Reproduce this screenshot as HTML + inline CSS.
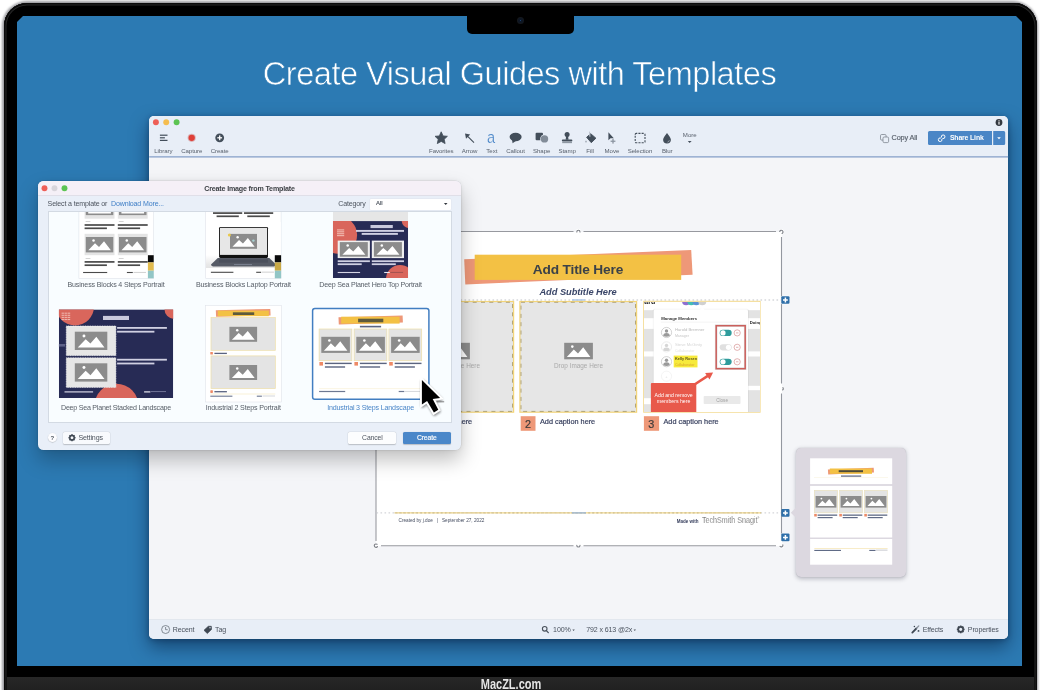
<!DOCTYPE html>
<html lang="en">
<head>
<meta charset="utf-8">
<title>Create Visual Guides with Templates</title>
<style>
*{box-sizing:border-box;margin:0;padding:0}
html,body{width:1040px;height:690px;overflow:hidden;background:#fff}
body{position:relative;font-family:"Liberation Sans",sans-serif;color:#444b55}
.abs{position:absolute}
.t{position:absolute;white-space:nowrap;line-height:1}
.c{transform:translateX(-50%)}
/* laptop */
#rim{left:1.600px;top:1.200px;width:1036.800px;height:720px;border-radius:25px;background:#9c9ca0;filter:blur(1.100px)}
#bezel{left:3.5px;top:3px;width:1033px;height:720px;border-radius:23px;background:#000;box-shadow:inset 0 0 0 1.5px #0b0b0b, inset 0 0 0 2.5px #262626, inset 0 0 0 4px #000}
#screen{left:17px;top:16px;width:1005px;height:650px;background:#2c7ab3;clip-path:polygon(6px 0,999px 0,1005px 6px,1005px 650px,0 650px,0 6px);overflow:hidden}
#notch{left:467px;top:14px;width:107px;height:19.5px;background:#000;border-radius:0 0 5px 5px}
#cam{left:518px;top:18px;width:5px;height:5px;border-radius:50%;background:#0d1624;box-shadow:0 0 0 1px #15181d}
#cam:after{content:"";position:absolute;left:1.7px;top:1.7px;width:1.6px;height:1.6px;border-radius:50%;background:#1f4f86}
#base{left:7px;top:677px;width:1027px;height:20px;background:linear-gradient(#272727,#1d1d1d)}
#brand{left:511.200px;top:677.200px;font-weight:bold;font-size:14.400px;color:#e6e6e6;transform:translateX(-50%) scaleX(.765);text-shadow:0 0 1px rgba(0,0,0,.6)}
#head{left:519.500px;top:58px;font-size:32.600px;color:#fff;letter-spacing:-.51px;transform:translateX(-50%);-webkit-text-stroke:.6px #2c7ab3}
/* app window */
#app{left:149.200px;top:116px;width:858.900px;height:523.300px;border-radius:5px;background:#f4f5f8;box-shadow:0 8px 18px rgba(0,20,50,.5),0 1px 5px rgba(0,20,50,.3)}
#tb{left:0;top:0;width:100%;height:41px;background:#e8eef7;border-radius:5px 5px 0 0}
#sb{left:0;top:503px;width:100%;height:20.300px;background:#e8eef7;border-radius:0 0 5px 5px;border-top:.5px solid #e2e7ee}
.tl{position:absolute;width:6.4px;height:6.4px;border-radius:50%}
.lab{position:absolute;white-space:nowrap;line-height:1;font-size:6.100px;letter-spacing:-.06px;color:#59616d;transform:translateX(-50%);top:148.200px}
.sbt{position:absolute;white-space:nowrap;line-height:1;font-size:7.050px;letter-spacing:-.12px;color:#4a525e;top:625.700px}
</style>
</head>
<body>
<div id="root" style="position:absolute;left:0;top:0;width:1040px;height:690px;will-change:transform;overflow:hidden">
<div id="rim" class="abs"></div>
<div id="bezel" class="abs"></div>
<div id="screen" class="abs"></div>
<div id="notch" class="abs"></div>
<div id="cam" class="abs"></div>
<div id="base" class="abs"></div>
<div id="brand" class="t">MacZL.com</div>
<div id="head" class="t">Create Visual Guides with Templates</div>

<!-- APP WINDOW -->
<div id="app" class="abs">
  <div id="tb" class="abs"></div>
  <div id="sb" class="abs"></div>
</div>
<svg class="abs" style="left:0;top:0" width="1040" height="690" viewBox="0 0 1040 690"><rect x="149.200" y="156.050" width="858.900" height="1.600" fill="#9bb0d2"/><circle cx="155.900" cy="122.200" r="2.950" fill="#ee5f57"/><circle cx="166.200" cy="122.200" r="2.950" fill="#f5bd4f"/><circle cx="176.600" cy="122.200" r="2.950" fill="#5cc453"/></svg>

<svg class="abs" style="left:0;top:0" width="1040" height="690" viewBox="0 0 1040 690">
 <g fill="#434e5a" stroke="none">
  <!-- library -->
  <rect x="159.9" y="134.6" width="7.6" height="1.2"/>
  <rect x="159.9" y="137.2" width="5" height="1.2"/>
  <rect x="159.9" y="139.8" width="7.6" height="1.2"/>
  <!-- capture -->
  <circle cx="191.7" cy="137.8" r="4.100" fill="#d9b4b8"/>
  <circle cx="191.7" cy="137.8" r="3.150" fill="#df3f38"/>
  <!-- create -->
  <circle cx="219.7" cy="137.8" r="4.4"/>
  <rect x="217.300" y="137.150" width="4.800" height="1.300" fill="#fff"/>
  <rect x="219.050" y="135.400" width="1.300" height="4.800" fill="#fff"/>
  <!-- star -->
  <path d="M441.2 131.8 L443.1 135.9 L447.4 136.3 L444.2 139.3 L445.1 143.6 L441.2 141.4 L437.3 143.6 L438.2 139.3 L435 136.3 L439.3 135.9 Z" stroke="#434e5a" stroke-width=".8" stroke-linejoin="round"/>
  <!-- arrow -->
  <path d="M474 142.6 L467.2 135.8" stroke="#434e5a" stroke-width="1.1" fill="none"/>
  <path d="M465 133.6 L470.2 134.6 L466 138.8 Z"/>
  <!-- callout -->
  <ellipse cx="515.6" cy="137" rx="6" ry="4.2"/>
  <path d="M512 139.5 L512.6 143.2 L516.5 140.5 Z"/>
  <!-- shape -->
  <rect x="535.6" y="132.8" width="7.4" height="7.4" rx="1"/>
  <circle cx="544.5" cy="138.9" r="4.3" fill="#e8eef7"/>
  <circle cx="544.5" cy="138.9" r="3.7" fill="#828c98"/>
  <!-- stamp -->
  <circle cx="567.1" cy="134.6" r="2.5"/>
  <path d="M566.100 136 h2 l.4 3.800 h-2.800 z"/>
  <rect x="561.9" y="139.4" width="10.4" height="2.2" rx=".8"/>
  <rect x="562.2" y="142.3" width="9.8" height=".8" fill="#68727e"/>
  <!-- fill -->
  <path d="M590.700 133.700 L595.900 138.200 L591.300 142.700 L586.600 137.300 Z" stroke="#434e5a" stroke-width=".9" stroke-linejoin="round"/>
  <path d="M589.500 132 L589.900 136.200" stroke="#bfc6d0" stroke-width="1.100" fill="none" stroke-linecap="round"/>
  <path d="M586 140.200 q1.300 1.900 0 2.500 q-1.300 -.6 0 -2.500z" fill="#7a838f"/>
  <!-- move -->
  <path d="M608.4 132.2 L608.4 140.2 L610.5 138.3 L613.8 138.3 Z"/>
  <rect x="610.6" y="140.6" width="4.8" height="1.3" fill="#8d96a1"/>
  <rect x="612.35" y="138.8" width="1.3" height="4.8" fill="#8d96a1"/>
  <!-- selection -->
  <rect x="635.2" y="133.4" width="9.8" height="9.3" rx="1" fill="none" stroke="#434e5a" stroke-width="1.1" stroke-dasharray="2.1 1.1" stroke-dashoffset="1"/>
  <!-- blur -->
  <path d="M667 132.9 C668.6 135.3 670.9 137.6 670.9 139.8 A3.9 3.6 0 0 1 663.1 139.8 C663.1 137.600 665.4 135.3 667 132.900 Z"/>
  <path d="M669.3 140.300 a2.200 2.200 0 0 1 -1.800 1.800" stroke="#aeb6c0" stroke-width=".8" fill="none"/>
  <!-- more caret -->
  <path d="M687.8 141 h3.800 l-1.900 2 z"/>
  <!-- info -->
  <circle cx="999" cy="122.500" r="3.400" fill="#33383f"/>
  <rect x="998.45" y="121.900" width="1.100" height="2.700" fill="#fff"/>
  <rect x="998.45" y="120.300" width="1.100" height="1.100" fill="#fff"/>
  <!-- copy all -->
  <rect x="880.5" y="134.500" width="5.600" height="5.600" rx="1.200" fill="none" stroke="#7d858f" stroke-width=".8"/>
  <rect x="883" y="137" width="5.600" height="5.600" rx="1.200" fill="#e8eef7" stroke="#7d858f" stroke-width=".8"/>
 </g>
 <!-- share link -->
 <path d="M929.500 131.100 H992 V145 H929.500 a1.500 1.500 0 0 1 -1.500 -1.500 V132.600 a1.500 1.500 0 0 1 1.500 -1.500z" fill="#4a86c6"/>
 <path d="M993.200 131.100 H1003.700 a1.500 1.500 0 0 1 1.500 1.500 V143.500 a1.500 1.500 0 0 1 -1.500 1.500 H993.200z" fill="#4a86c6"/>
 <path d="M997.200 137.200 h3.600 l-1.800 2 z" fill="#fff"/>
 <g fill="none" stroke="#fff" stroke-width="1" stroke-linecap="round">
  <path d="M941.300 137.100 a1.850 1.850 0 1 1 1.500 1.500"/>
  <path d="M942 139.400 a1.850 1.850 0 1 1 -1.500 -1.500"/>
 </g>
</svg>
<div class="lab" style="left:163.400px">Library</div>
<div class="lab" style="left:191.800px">Capture</div>
<div class="lab" style="left:219.700px">Create</div>
<div class="lab" style="left:441.300px">Favorites</div>
<div class="lab" style="left:469.500px">Arrow</div>
<div class="lab" style="left:491.800px">Text</div>
<div class="lab" style="left:515.500px">Callout</div>
<div class="lab" style="left:541.700px">Shape</div>
<div class="lab" style="left:567.100px">Stamp</div>
<div class="lab" style="left:590px">Fill</div>
<div class="lab" style="left:611.900px">Move</div>
<div class="lab" style="left:640px">Selection</div>
<div class="lab" style="left:667.200px">Blur</div>
<div class="lab" style="left:689.700px;top:131.900px;font-size:6.100px">More</div>
<div class="t c" style="left:491.300px;top:129.200px;font-size:17px;color:#4a86c8;-webkit-text-stroke:.22px #e8eef7;transform:translateX(-50%) scaleX(.86)">a</div>
<div class="t" style="left:891.600px;top:134.200px;font-size:7.300px;letter-spacing:-.15px;color:#59616c;-webkit-text-stroke:.15px #59616c">Copy All</div>
<div class="t" style="left:949.900px;top:135.200px;font-size:6.900px;letter-spacing:-.15px;font-weight:bold;color:#fff">Share Link</div>

<div class="abs" style="left:376px;top:231.5px;width:405.5px;height:314px;background:#fff"></div>
<svg class="abs" style="left:0;top:0" width="1040" height="690" viewBox="0 0 1040 690">
 <!-- selection frame -->
 <g stroke="#97999f" stroke-width="1.1" fill="none">
  <path d="M381 231.500 H573.5 M583.500 231.500 H776"/>
  <path d="M381 545.700 H573.5 M583.500 545.700 H776"/>
  <path d="M781.500 237 V383.500 M781.500 393.500 V541" stroke="#93979f" stroke-width="1.100"/>
  <path d="M376 237 V541" stroke="#85878c" stroke-width=".9"/>
 </g>
 <g fill="#fff" opacity=".9">
  <circle cx="578.400" cy="231.500" r="2.700"/><circle cx="781.400" cy="231.800" r="2.700"/><circle cx="781.500" cy="388.700" r="2.700"/>
  <circle cx="781.500" cy="545.700" r="2.700"/><circle cx="578.400" cy="545.700" r="2.700"/><circle cx="376" cy="545.700" r="2.700"/>
 </g>
 <g fill="none" stroke="#7f8289" stroke-width="1.150" stroke-linecap="round">
  <path d="M576.800 231.900 a1.600 1.600 0 0 1 3.200 0"/>
  <path d="M779.700 231.500 a1.700 1.700 0 1 1 2.400 2"/>
  <path d="M782.900 387.600 a1.600 1.600 0 0 1 -.3 2.400"/>
  <path d="M782.900 544.800 a1.700 1.700 0 0 1 -2.900 1.500"/>
  <path d="M580 545.400 a1.600 1.600 0 0 1 -3.200 0"/>
  <path d="M377.400 546.600 a1.700 1.700 0 1 1 -.4 -2.300"/>
 </g>
 <!-- banner -->
 <path d="M464.200 259.300 L691.200 250.100 L692.600 274.800 L465.300 284.400 Z" fill="#ee9878"/>
 <rect x="474.700" y="254.700" width="206.500" height="25.200" fill="#f3c144"/>
 <!-- guide lines -->
 <path d="M376.500 300 H781" stroke="#b9bcc2" stroke-width=".9" stroke-dasharray="1.600 2.400"/>
 <path d="M376.500 512.900 H781" stroke="#c3c5ca" stroke-width=".9" stroke-dasharray="1.600 2.400"/>
 <rect x="572" y="299.300" width="13" height="1.400" fill="#a8c3e6"/>
 <!-- placeholders -->
 <g>
  <rect x="396.900" y="301.500" width="116.700" height="110.700" fill="#e6e6e6" stroke="#f3d57a" stroke-width="1.200"/>
  <rect x="398" y="302.300" width="114.500" height="109.100" fill="none" stroke="#a89a68" stroke-width="1" stroke-dasharray="4 4.300" opacity=".85"/>
  <rect x="519.900" y="301.500" width="116.700" height="110.700" fill="#e6e6e6" stroke="#f3d57a" stroke-width="1.200"/>
  <rect x="521" y="302.300" width="114.500" height="109.100" fill="none" stroke="#a89a68" stroke-width="1" stroke-dasharray="4 4.300" opacity=".85"/>
  <rect x="643.700" y="301.300" width="116.400" height="110.900" fill="#fff" stroke="#f3d98a" stroke-width="1"/>
 </g>
 <!-- image icons -->
 <g id="imgico2">
  <rect x="564.200" y="342.800" width="28.700" height="16.500" fill="#8c8c8c"/>
  <path d="M566.800 357 L573.800 349.500 L578 353.500 L583.200 347.300 L590.400 357 Z" fill="#fff"/>
  <circle cx="572.300" cy="346.600" r="1.300" fill="#fff"/>
 </g>
 <g transform="translate(-123,0)">
  <rect x="564.200" y="342.800" width="28.700" height="16.500" fill="#8c8c8c"/>
  <path d="M566.800 357 L573.800 349.500 L578 353.500 L583.200 347.300 L590.400 357 Z" fill="#fff"/>
  <circle cx="572.300" cy="346.600" r="1.300" fill="#fff"/>
 </g>
 <!-- badges -->
 <rect x="397.700" y="416.200" width="14.800" height="14.600" fill="#ee9878"/>
 <rect x="520.700" y="416.200" width="14.800" height="14.600" fill="#ee9878"/>
 <rect x="643.900" y="416.200" width="15.200" height="14.600" fill="#ee9878"/>
 <!-- footer line -->
 <path d="M394.600 512.900 H761.200" stroke="#f1d274" stroke-width="1"/>
 <path d="M394.600 512.900 H761.200" stroke="#b9ac86" stroke-width=".8" stroke-dasharray="2.400 1.800" opacity=".75"/>
 <rect x="572" y="512.200" width="14" height="1.400" fill="#9fb8d8"/>
 <!-- plus buttons -->
 <g id="plus1">
  <rect x="780.700" y="295.700" width="9.400" height="8.600" rx="1.600" fill="#fff" opacity=".8"/>
  <rect x="781.300" y="296.200" width="8.200" height="7.600" rx="1" fill="#2f6fa9"/>
  <path d="M783 300 h4.800 M785.400 297.600 v4.800" stroke="#fff" stroke-width="1.500"/>
 </g>
 <g transform="translate(0,212.900)">
  <rect x="781.300" y="296.200" width="8.200" height="7.600" rx="1" fill="#2f6fa9"/>
  <path d="M783 300 h4.800 M785.400 297.600 v4.800" stroke="#fff" stroke-width="1.500"/>
 </g>
 <g transform="translate(0,237.400)">
  <rect x="780.700" y="295.700" width="9.400" height="8.600" rx="1.600" fill="#fff" opacity=".8"/>
  <rect x="781.300" y="296.200" width="8.200" height="7.600" rx="1" fill="#2f6fa9"/>
  <path d="M783 300 h4.800 M785.400 297.600 v4.800" stroke="#fff" stroke-width="1.500"/>
 </g>
</svg>
<div class="t c" style="left:578px;top:262.800px;font-size:13.700px;font-weight:bold;color:#3b4148;letter-spacing:-.15px">Add Title Here</div>
<div class="t c" style="left:578px;top:288.200px;font-size:9.300px;font-weight:bold;font-style:italic;color:#3a4668;letter-spacing:-.05px">Add Subtitle Here</div>
<div class="t c" style="left:578.500px;top:362.600px;font-size:6.400px;color:#a9a9a9">Drop Image Here</div>
<div class="t c" style="left:455.500px;top:362.600px;font-size:6.400px;color:#a9a9a9">Drop Image Here</div>
<div class="t c" style="left:404.900px;top:418.800px;font-size:10.800px;color:#3d3a3a;-webkit-text-stroke:.2px #3d3a3a">1</div>
<div class="t c" style="left:527.900px;top:418.800px;font-size:10.800px;color:#3d3a3a;-webkit-text-stroke:.2px #3d3a3a">2</div>
<div class="t c" style="left:651.200px;top:418.800px;font-size:10.800px;color:#3d3a3a;-webkit-text-stroke:.2px #3d3a3a">3</div>
<div class="t" style="left:417px;top:417.600px;font-size:7.300px;color:#3a4260;-webkit-text-stroke:.2px #3a4260">Add caption here</div>
<div class="t" style="left:540px;top:417.600px;font-size:7.300px;color:#3a4260;-webkit-text-stroke:.2px #3a4260">Add caption here</div>
<div class="t" style="left:663.500px;top:417.600px;font-size:7.300px;color:#3a4260;-webkit-text-stroke:.2px #3a4260">Add caption here</div>
<div class="t" style="left:398.500px;top:518.900px;font-size:4.700px;color:#444c60">Created by j.doe &nbsp;&nbsp;|&nbsp;&nbsp; September 27, 2022</div>
<div class="t" style="left:676.800px;top:519.500px;font-size:4.500px;font-weight:bold;color:#3a4260">Made with</div>
<div class="t" style="left:702.400px;top:515.700px;font-size:9.200px;color:#4f4f4f;transform:scaleX(.775);transform-origin:0 50%;-webkit-text-stroke:.22px #fff">TechSmith Snagit<span style="font-size:3px;vertical-align:top;position:relative;top:1.500px;-webkit-text-stroke:0">®</span></div>

<svg class="abs" style="left:644.200px;top:301.800px" width="115.400" height="109.900" viewBox="644.200 301.800 115.400 109.900" font-family="Liberation Sans, sans-serif">
 <rect x="643" y="300" width="118" height="113" fill="#fff"/>
 <!-- gray bands -->
 <g fill="#e3e3e3">
  <rect x="643" y="310" width="118" height="8"/>
  <rect x="643" y="328.700" width="118" height="22.500"/>
  <rect x="643" y="356.300" width="12" height="41.700"/>
  <rect x="643" y="404" width="12" height="9"/>
  <rect x="747" y="356.300" width="14" height="29.300"/>
  <rect x="747" y="390" width="14" height="23"/>
 </g>
 <text x="644.500" y="303.400" font-size="7" font-weight="bold" fill="#222">ard</text>
 <circle cx="686.300" cy="301" r="4" fill="#8f6fd0"/>
 <circle cx="691.500" cy="301" r="4" fill="#43bdb2"/>
 <circle cx="696.500" cy="301" r="4" fill="#5b92d4"/>
 <circle cx="702.500" cy="301" r="4" fill="#d0d0d0"/>
 <!-- popup card -->
 <rect x="653" y="308.600" width="96" height="106" rx="1.500" fill="#000" opacity=".05"/>
 <path d="M655.300 309.300 H700.300 L702.500 306.800 L704.700 309.300 H746.700 a1.500 1.500 0 0 1 1.500 1.500 V413 H653.800 V310.800 a1.500 1.500 0 0 1 1.500 -1.500z" fill="#fff"/>
 <text x="661.400" y="319.500" font-size="4.300" font-weight="bold" fill="#333">Manage Members</text>
 <rect x="661" y="321.600" width="80" height=".5" fill="#e8e8e8"/>
 <text x="750" y="324.300" font-size="4.200" font-weight="bold" fill="#222">Doing</text>
 <!-- avatars -->
 <g id="av">
  <circle cx="666.700" cy="332.300" r="5.100" fill="#fff" stroke="#b5b5b5" stroke-width=".6"/>
  <circle cx="666.700" cy="330.800" r="1.700" fill="#9a9a9a"/>
  <path d="M663.400 335.800 q0 -2.900 3.300 -2.900 q3.300 0 3.300 2.900 q-3.300 1.400 -6.600 0z" fill="#9a9a9a"/>
 </g>
 <g opacity=".4" transform="translate(0,14.400)">
  <circle cx="666.700" cy="332.300" r="5.100" fill="#fff" stroke="#b5b5b5" stroke-width=".6"/>
  <circle cx="666.700" cy="330.800" r="1.700" fill="#9a9a9a"/>
  <path d="M663.400 335.800 q0 -2.900 3.300 -2.900 q3.300 0 3.300 2.900 q-3.300 1.400 -6.600 0z" fill="#9a9a9a"/>
 </g>
 <g transform="translate(0,29.200)">
  <circle cx="666.700" cy="332.300" r="5.100" fill="#fff" stroke="#b5b5b5" stroke-width=".6"/>
  <circle cx="666.700" cy="330.800" r="1.700" fill="#9a9a9a"/>
  <path d="M663.400 335.800 q0 -2.900 3.300 -2.900 q3.300 0 3.300 2.900 q-3.300 1.400 -6.600 0z" fill="#9a9a9a"/>
 </g>
 <circle cx="666.700" cy="376" r="5.100" fill="#fff" stroke="#ededed" stroke-width=".6"/>
 <text x="666.700" y="377.400" font-size="4" fill="#ddd" text-anchor="middle">+</text>
 <text x="675.100" y="331.200" font-size="4.200" fill="#b9b9b9">Harold Bremner</text>
 <text x="675.100" y="336.800" font-size="3.600" fill="#c6c6c6">Manager</text>
 <text x="675.100" y="345.700" font-size="4.200" fill="#d6d6d6">Steve McGinty</text>
 <text x="675.100" y="351.400" font-size="3.600" fill="#e4e4e4">Collaborator</text>
 <rect x="673.900" y="355.400" width="23.800" height="11.800" fill="#f7ea3b"/>
 <text x="675.100" y="360.300" font-size="3.900" fill="#5b5320" font-weight="bold">Kelly Rosen</text>
 <text x="675.100" y="365.900" font-size="3.600" fill="#d9a62c">Collaborator</text>
 <!-- toggles -->
 <g>
  <rect x="719.900" y="329.600" width="12" height="6.200" rx="3.100" fill="#2f9c9c"/>
  <circle cx="723.200" cy="332.700" r="2.600" fill="#fff"/>
  <rect x="719.900" y="344" width="12" height="6.200" rx="3.100" fill="#e0e0e0"/>
  <circle cx="728.700" cy="347.100" r="2.600" fill="#fff"/>
  <rect x="719.900" y="358.500" width="12" height="6.200" rx="3.100" fill="#2f9c9c"/>
  <circle cx="723.200" cy="361.600" r="2.600" fill="#fff"/>
 </g>
 <g fill="#fff" stroke="#cf8080" stroke-width=".6">
  <circle cx="737.400" cy="332.700" r="3.100"/>
  <circle cx="737.400" cy="347.100" r="3.100"/>
  <circle cx="737.400" cy="361.600" r="3.100"/>
  <path d="M736.200 332.700 h2.400 M736.200 347.100 h2.400 M736.200 361.600 h2.400"/>
 </g>
 <rect x="716.400" y="325.500" width="29" height="43" fill="none" stroke="#000" stroke-opacity=".12" stroke-width="2.600"/>
 <rect x="716.400" y="325.500" width="29" height="43" fill="none" stroke="#cb5f5b" stroke-width="1.500"/>
 <!-- close -->
 <rect x="703.900" y="395.800" width="36.800" height="8.100" rx=".8" fill="#e9e9e9"/>
 <text x="722.300" y="401.600" font-size="4.600" fill="#a2a2a2" text-anchor="middle">Close</text>
 <!-- callout -->
 <path d="M695.500 383.800 L708.400 375.400" stroke="#e8594b" stroke-width="2.600" fill="none"/>
 <path d="M713.300 372.200 L705.300 372.900 L709.700 379.300 Z" fill="#e8594b"/>
 <rect x="651.100" y="382.800" width="45.400" height="31" rx="1" fill="#e8594b"/>
 <text x="673.800" y="396.900" font-size="5.200" fill="#fff" text-anchor="middle">Add and remove</text>
 <text x="673.800" y="403" font-size="5.200" fill="#fff" text-anchor="middle">members here</text>
</svg>

<div class="abs" style="left:796px;top:448px;width:110.300px;height:129px;border-radius:5px;background:#dcd8e0;box-shadow:0 1.500px 4px rgba(40,40,60,.28),0 0 1px rgba(40,40,60,.25)"></div>
<svg class="abs" style="left:0;top:0" width="1040" height="690" viewBox="0 0 1040 690">
 <path d="M796.300 507.300 L790.800 512.700 L796.300 518.100 Z" fill="#dcd8e0"/>
 <g fill="#fff">
  <rect x="810.100" y="458.300" width="82.100" height="25.800"/>
  <rect x="810.100" y="485.900" width="82.100" height="51.600"/>
  <rect x="810.100" y="539" width="82.100" height="25.700"/>
 </g>
 <!-- banner -->
 <path d="M827.900 469.600 L873.700 467.700 L874 472.600 L828.200 474.600 Z" fill="#ee9878"/>
 <rect x="829.800" y="468.500" width="42.200" height="5.300" fill="#f3c144"/>
 <rect x="838.700" y="470.200" width="24.300" height="2" fill="#4c4a3a"/>
 <rect x="841" y="475.500" width="20.200" height="1.200" fill="#5b6480"/>
 <rect x="814" y="477.600" width="74" height=".4" fill="#f5ecd0"/>
 <!-- 3 placeholders -->
 <g>
  <rect x="814.300" y="490.300" width="23.200" height="22.500" fill="#e4e4e4" stroke="#eadfb8" stroke-width=".6"/>
  <rect x="839.400" y="490.300" width="23.200" height="22.500" fill="#e4e4e4" stroke="#eadfb8" stroke-width=".6"/>
  <rect x="864.400" y="490.300" width="23.200" height="22.500" fill="#e4e4e4" stroke="#eadfb8" stroke-width=".6"/>
 </g>
 <g id="pi">
  <rect x="815.600" y="496" width="20.800" height="11.600" fill="#8c8c8c"/>
  <path d="M817.400 506 L822.400 500.700 L825.400 503.500 L829.200 499.100 L834.600 506 Z" fill="#fff"/>
  <circle cx="821.400" cy="498.600" r=".9" fill="#fff"/>
 </g>
 <g transform="translate(25,0)">
  <rect x="815.600" y="496" width="20.800" height="11.600" fill="#8c8c8c"/>
  <path d="M817.400 506 L822.400 500.700 L825.400 503.500 L829.200 499.100 L834.600 506 Z" fill="#fff"/>
  <circle cx="821.400" cy="498.600" r=".9" fill="#fff"/>
 </g>
 <g transform="translate(50,0)">
  <rect x="815.600" y="496" width="20.800" height="11.600" fill="#8c8c8c"/>
  <path d="M817.400 506 L822.400 500.700 L825.400 503.500 L829.200 499.100 L834.600 506 Z" fill="#fff"/>
  <circle cx="821.400" cy="498.600" r=".9" fill="#fff"/>
 </g>
 <g>
  <rect x="814.200" y="513.900" width="2.600" height="2.600" fill="#ee8a66"/>
  <rect x="817.600" y="514.500" width="19.600" height="1.300" fill="#606b86"/>
  <rect x="817.600" y="517" width="15" height="1.200" fill="#606b86"/>
  <rect x="839.300" y="513.900" width="2.600" height="2.600" fill="#ee8a66"/>
  <rect x="842.700" y="514.500" width="19.600" height="1.300" fill="#606b86"/>
  <rect x="842.700" y="517" width="15" height="1.200" fill="#606b86"/>
  <rect x="864.300" y="513.900" width="2.600" height="2.600" fill="#ee8a66"/>
  <rect x="867.700" y="514.500" width="19.600" height="1.300" fill="#606b86"/>
  <rect x="867.700" y="517" width="15" height="1.200" fill="#606b86"/>
 </g>
 <!-- footer -->
 <rect x="814.300" y="548.200" width="73.300" height=".6" fill="#f3dfa4"/>
 <rect x="814.300" y="549.900" width="26.700" height="1.100" fill="#606b86"/>
 <rect x="869.300" y="549.900" width="6.200" height="1.100" fill="#606b86"/>
 <rect x="876" y="549.700" width="11.500" height=".8" fill="#b9bcc4"/>
</svg>

<svg class="abs" style="left:0;top:0" width="1040" height="690" viewBox="0 0 1040 690">
 <!-- recent -->
 <circle cx="165.600" cy="629.500" r="4" fill="none" stroke="#6a727c" stroke-width=".8"/>
 <path d="M165.600 627 V629.700 H167.700" fill="none" stroke="#6a727c" stroke-width=".8"/>
 <!-- tag -->
 <path d="M204 630.300 L208.300 626.300 L211.300 626.300 L211.500 629.400 L207.300 633.500 Z" fill="#3f4853" stroke="#3f4853" stroke-width=".7" stroke-linejoin="round"/>
 <circle cx="210" cy="627.800" r=".7" fill="#e8eef7"/>
 <!-- magnifier -->
 <circle cx="544.700" cy="628.800" r="2.300" fill="none" stroke="#4a525c" stroke-width="1.100"/>
 <path d="M546.400 630.600 L548.300 632.600" stroke="#4a525c" stroke-width="1.300" stroke-linecap="round"/>
 <path d="M572.400 629.500 h2.400 l-1.200 1.500z M633.600 629.500 h2.400 l-1.200 1.500z" fill="#4a525c"/>
 <!-- effects wand -->
 <path d="M912.300 632.600 L916.300 628.500" stroke="#3f4853" stroke-width="1.800" stroke-linecap="round"/>
 <path d="M916.800 628 L918.800 625.900" stroke="#8a929d" stroke-width="1.300" stroke-linecap="round"/>
 <circle cx="918.500" cy="630.900" r=".95" fill="#3f4853"/>
 <circle cx="914.400" cy="626.400" r=".75" fill="#3f4853"/>
 <!-- gear -->
 <g transform="translate(960.700,629.400) scale(.9)">
  <circle r="2.700" fill="none" stroke="#3f4853" stroke-width="1.900"/>
  <g fill="#3f4853">
   <rect x="-.9" y="-4.300" width="1.800" height="1.600"/>
   <rect x="-.9" y="2.700" width="1.800" height="1.600"/>
   <rect x="-4.300" y="-.9" width="1.600" height="1.800"/>
   <rect x="2.700" y="-.9" width="1.600" height="1.800"/>
   <g transform="rotate(45)">
    <rect x="-.9" y="-4.300" width="1.800" height="1.600"/>
    <rect x="-.9" y="2.700" width="1.800" height="1.600"/>
    <rect x="-4.300" y="-.9" width="1.600" height="1.800"/>
    <rect x="2.700" y="-.9" width="1.600" height="1.800"/>
   </g>
  </g>
 </g>
</svg>
<div class="sbt" style="left:172.800px">Recent</div>
<div class="sbt" style="left:215px">Tag</div>
<div class="sbt" style="left:553.100px">100%</div>
<div class="sbt" style="left:586.200px">792 x 613 @2x</div>
<div class="sbt" style="left:922.700px">Effects</div>
<div class="sbt" style="left:967.800px">Properties</div>

<div class="abs" style="left:38px;top:181.300px;width:423.300px;height:268.600px;border-radius:5.500px;background:#e9eff8;box-shadow:0 10px 20px rgba(0,0,0,.25),0 0 5px rgba(0,0,0,.07),0 0 0 .5px rgba(0,0,0,.08);overflow:hidden">
 <div class="abs" style="left:0;top:0;width:100%;height:15px;background:#f5f0f7;border-bottom:1px solid #e0dfe8"></div>
 <div class="abs" style="left:9.600px;top:30.100px;width:404.500px;height:211.600px;background:#f9fdff;border:.8px solid #d3dae3"></div>
 <div class="abs" style="left:332px;top:18px;width:81.400px;height:11px;background:#fff;border-radius:1px;box-shadow:0 0 0 .4px #dfe4ec"></div>
 <div class="abs" style="left:24.800px;top:250.700px;width:47.200px;height:11.700px;background:#f8fafd;border-radius:1.600px;box-shadow:0 .5px 1.200px rgba(0,0,0,.2),0 0 0 .3px rgba(0,0,0,.06)"></div>
 <div class="abs" style="left:310.400px;top:250.700px;width:47.800px;height:11.700px;background:#fcfdfe;border-radius:1.600px;box-shadow:0 .5px 1.200px rgba(0,0,0,.2),0 0 0 .3px rgba(0,0,0,.06)"></div>
 <div class="abs" style="left:365px;top:250.700px;width:47.500px;height:11.700px;background:#4a87c9;border-radius:1.600px;box-shadow:0 .5px 1px rgba(0,0,0,.2)"></div>
 <div class="abs" style="left:9.700px;top:251.800px;width:9.200px;height:9.200px;border-radius:50%;background:#fdfdff;box-shadow:0 .4px 1px rgba(0,0,0,.3)"></div>
</div>

<svg class="abs" style="left:0;top:0" width="1040" height="690" viewBox="0 0 1040 690">
<defs><clipPath id="lc"><rect x="48.400" y="212" width="403" height="210.300"/></clipPath><clipPath id="c3"><rect x="332.900" y="212" width="75.200" height="66"/></clipPath><clipPath id="c3b"><rect x="332.900" y="221.100" width="75.200" height="56.900"/></clipPath><clipPath id="c4"><rect x="58.900" y="309.400" width="114.300" height="88.600"/></clipPath><linearGradient id="fl" x1="0" y1="0" x2="0" y2="1"><stop offset="0" stop-color="#fff"/><stop offset=".72" stop-color="#fff"/><stop offset=".92" stop-color="#e9e9e9"/><stop offset="1" stop-color="#e4e4e4"/></linearGradient></defs>
<circle cx="44.500" cy="188.200" r="2.950" fill="#ee5f57"/><circle cx="54.500" cy="188.200" r="2.950" fill="#d8d5db"/><circle cx="64.500" cy="188.200" r="2.950" fill="#5cc453"/>
<g clip-path="url(#lc)">
<rect x="78.900" y="205" width="74.800" height="73.300" fill="#fff" stroke="#dfe3ea" stroke-width=".6"/>
<rect x="84.6" y="205" width="29.9" height="13.700" fill="#e4e4e4"/>
<rect x="85.8" y="205" width="27.5" height="10.100" fill="#8c8c8c"/>
<rect x="88.19999999999999" y="205" width="22.7" height="8.500" fill="#fff"/>
<rect x="85.60" y="221.20" width="4.80" height="0.8" fill="#c9c9c9"/>
<rect x="84.60" y="224.15" width="29.90" height="1.7" fill="#4a4a4a"/>
<rect x="84.60" y="227.45" width="22.30" height="1.7" fill="#4a4a4a"/>
<rect x="84.6" y="233.800" width="29.9" height="21.400" fill="#e4e4e4"/>
<rect x="85.80" y="237.00" width="27.50" height="15.40" fill="#8c8c8c"/><path d="M88.29 250.25 L95.00 243.25 L99.02 246.99 L104.01 241.20 L110.90 250.25 Z" fill="#fff"/><circle cx="93.56" cy="240.55" r="1.25" fill="#fff"/>
<rect x="85.60" y="258.10" width="4.80" height="0.8" fill="#c9c9c9"/>
<rect x="84.60" y="261.05" width="29.90" height="1.7" fill="#4a4a4a"/>
<rect x="84.60" y="264.35" width="22.30" height="1.7" fill="#4a4a4a"/>
<rect x="117.8" y="205" width="29.9" height="13.700" fill="#e4e4e4"/>
<rect x="119.0" y="205" width="27.5" height="10.100" fill="#8c8c8c"/>
<rect x="121.39999999999999" y="205" width="22.7" height="8.500" fill="#fff"/>
<rect x="118.80" y="221.20" width="4.80" height="0.8" fill="#c9c9c9"/>
<rect x="117.80" y="224.15" width="29.90" height="1.7" fill="#4a4a4a"/>
<rect x="117.80" y="227.45" width="22.30" height="1.7" fill="#4a4a4a"/>
<rect x="117.8" y="233.800" width="29.9" height="21.400" fill="#e4e4e4"/>
<rect x="119.00" y="237.00" width="27.50" height="15.40" fill="#8c8c8c"/><path d="M121.49 250.25 L128.20 243.25 L132.22 246.99 L137.21 241.20 L144.10 250.25 Z" fill="#fff"/><circle cx="126.76" cy="240.55" r="1.25" fill="#fff"/>
<rect x="118.80" y="258.10" width="4.80" height="0.8" fill="#c9c9c9"/>
<rect x="117.80" y="261.05" width="29.90" height="1.7" fill="#4a4a4a"/>
<rect x="117.80" y="264.35" width="22.30" height="1.7" fill="#4a4a4a"/>
<rect x="83.10" y="271.95" width="24.10" height="1.1" fill="#4a4a4a"/>
<rect x="126.90" y="271.95" width="5.90" height="1.1" fill="#4a4a4a"/>
<rect x="133.50" y="271.95" width="12.50" height="0.7" fill="#bdbdbd"/>
<rect x="147.900" y="255.200" width="5.800" height="7.200" fill="#0a0a0a"/><rect x="147.900" y="262.400" width="5.800" height="8.300" fill="#e2bb4d"/><rect x="147.900" y="270.700" width="5.800" height="7.600" fill="#92c6c6"/>
<rect x="205.700" y="205" width="75.400" height="73.300" fill="#fff" stroke="#dfe3ea" stroke-width=".6"/>
<rect x="206" y="222" width="74.800" height="46" fill="url(#fl)"/>
<rect x="213.00" y="212.25" width="29.20" height="1.7" fill="#4a4a4a"/>
<rect x="244.00" y="212.25" width="29.20" height="1.7" fill="#4a4a4a"/>
<rect x="216.60" y="215.45" width="22.20" height="1.7" fill="#4a4a4a"/>
<rect x="247.30" y="215.45" width="22.50" height="1.7" fill="#4a4a4a"/>
<rect x="219.100" y="226.900" width="48.900" height="31" rx="1.300" fill="#111"/>
<rect x="220" y="227.800" width="47.100" height="27.100" fill="#e7e7e7"/>
<rect x="230.00" y="233.90" width="27.00" height="14.90" fill="#8c8c8c"/><path d="M232.45 246.72 L239.03 239.95 L242.98 243.56 L247.87 237.96 L254.65 246.72 Z" fill="#fff"/><circle cx="237.62" cy="237.33" r="1.22" fill="#fff"/>
<circle cx="229.400" cy="235" r="1.500" fill="#e9c84b"/><circle cx="253.400" cy="240.600" r="1.200" fill="#a8d4d4"/>
<path d="M217.800 257.900 H269.300 L276 264.600 Q276 266.400 274 266.400 H213 Q211 266.400 211 264.600 Z" fill="#565b66"/>
<rect x="219" y="259.300" width="49" height="3.400" fill="#474c58" opacity=".7"/>
<rect x="234.00" y="264.35" width="18.00" height="0.7" fill="#8b93a3"/>
<rect x="210.90" y="271.75" width="22.50" height="1.1" fill="#4a4a4a"/>
<rect x="256.20" y="271.75" width="4.90" height="1.1" fill="#4a4a4a"/>
<rect x="261.80" y="271.75" width="12.20" height="0.7" fill="#bdbdbd"/>
<rect x="274.800" y="255.200" width="6.300" height="7.200" fill="#0a0a0a"/><rect x="274.800" y="262.400" width="6.300" height="8.300" fill="#c9a946"/><rect x="274.800" y="270.700" width="6.300" height="7.600" fill="#92c6c6"/>
<g clip-path="url(#c3)">
<rect x="332.900" y="205" width="75.200" height="16.500" fill="#e6e6e6"/>
<rect x="332.900" y="221.100" width="75.200" height="57" fill="#272b55"/>
<g clip-path="url(#c3b)"><circle cx="338.300" cy="235" r="18.800" fill="#d9665c"/><circle cx="409.500" cy="220.500" r="7.800" fill="#d9665c"/><circle cx="400" cy="279" r="14" fill="#d9665c"/></g>
</g>
<rect x="337.00" y="229.30" width="7.20" height="1.2" fill="#efb3a9"/>
<rect x="337.00" y="231.20" width="7.20" height="1.2" fill="#efb3a9"/>
<rect x="337.00" y="233.10" width="7.20" height="1.2" fill="#efb3a9"/>
<rect x="337.00" y="235.00" width="7.20" height="1.2" fill="#efb3a9"/>
<rect x="370.500" y="225" width="22.300" height="3.100" fill="#c9c9dd"/>
<rect x="356.00" y="229.95" width="48.00" height="1.9" fill="#d0d0e2"/>
<rect x="361.70" y="232.95" width="36.20" height="1.9" fill="#d0d0e2"/>
<rect x="337.7" y="240.600" width="32.200" height="17.500" fill="#efefef"/>
<rect x="339.80" y="242.10" width="28.00" height="14.60" fill="#8c8c8c"/><path d="M342.34 254.66 L349.17 248.03 L353.26 251.57 L358.34 246.08 L365.36 254.66 Z" fill="#fff"/><circle cx="347.70" cy="245.46" r="1.27" fill="#fff"/>
<rect x="337.70" y="260.30" width="32.20" height="1.8" fill="#d0d0e2"/>
<rect x="337.70" y="263.30" width="24.00" height="1.8" fill="#d0d0e2"/>
<rect x="371.8" y="240.600" width="32.200" height="17.500" fill="#efefef"/>
<rect x="373.90" y="242.10" width="28.00" height="14.60" fill="#8c8c8c"/><path d="M376.44 254.66 L383.27 248.03 L387.36 251.57 L392.44 246.08 L399.46 254.66 Z" fill="#fff"/><circle cx="381.80" cy="245.46" r="1.27" fill="#fff"/>
<rect x="371.80" y="260.30" width="32.20" height="1.8" fill="#d0d0e2"/>
<rect x="371.80" y="263.30" width="24.00" height="1.8" fill="#d0d0e2"/>
<rect x="337.70" y="271.95" width="22.40" height="1.1" fill="#d5d5e4"/>
<rect x="384.20" y="271.95" width="5.50" height="1.1" fill="#e8e8f0"/>
<rect x="390.30" y="271.95" width="12.80" height="0.7" fill="#8a4a4a"/>
<g clip-path="url(#c4)">
<rect x="58.900" y="309.400" width="114.300" height="88.600" fill="#272b55"/>
<circle cx="75" cy="306.500" r="19" fill="#d9665c"/><circle cx="174" cy="309.400" r="9.500" fill="#d9665c"/><circle cx="116.500" cy="405.800" r="22" fill="#d9665c"/>
</g>
<rect x="61.60" y="312.65" width="8.60" height="1.1" fill="#eeb3aa"/>
<rect x="61.60" y="314.75" width="8.60" height="1.1" fill="#eeb3aa"/>
<rect x="61.60" y="316.85" width="8.60" height="1.1" fill="#eeb3aa"/>
<rect x="61.60" y="318.95" width="8.60" height="1.1" fill="#eeb3aa"/>
<path d="M64.400 312 V320.500 M67.400 312 V320.500" stroke="#d9665c" stroke-width=".6"/>
<rect x="103" y="315.900" width="26" height="4.100" fill="#c9c9dd"/>
<rect x="58.90" y="344.00" width="6.10" height="2.6" fill="#5e6188"/>
<rect x="66.300" y="326" width="49.600" height="29.600" fill="#e6e6e6" stroke="#f6f6f6" stroke-width=".7" stroke-dasharray="1 .7"/>
<rect x="74.80" y="331.70" width="32.50" height="18.30" fill="#8c8c8c"/><path d="M77.74 347.45 L85.67 339.13 L90.43 343.57 L96.32 336.69 L104.47 347.45 Z" fill="#fff"/><circle cx="83.97" cy="335.91" r="1.47" fill="#fff"/>
<rect x="117.10" y="327.00" width="49.80" height="1.8" fill="#d0d0e2"/>
<rect x="117.10" y="330.80" width="37.30" height="1.8" fill="#d0d0e2"/>
<rect x="66.300" y="357.8" width="49.600" height="29.600" fill="#e6e6e6" stroke="#f6f6f6" stroke-width=".7" stroke-dasharray="1 .7"/>
<rect x="74.80" y="363.30" width="32.50" height="18.30" fill="#8c8c8c"/><path d="M77.74 379.05 L85.67 370.73 L90.43 375.17 L96.32 368.29 L104.47 379.05 Z" fill="#fff"/><circle cx="83.97" cy="367.51" r="1.47" fill="#fff"/>
<rect x="117.10" y="358.80" width="49.80" height="1.8" fill="#d0d0e2"/>
<rect x="117.10" y="362.60" width="37.30" height="1.8" fill="#d0d0e2"/>
<rect x="64.50" y="391.30" width="28.60" height="1.2" fill="#d5d5e4"/>
<rect x="144.10" y="391.30" width="6.30" height="1.2" fill="#e8e8f0"/>
<rect x="151.00" y="391.35" width="15.00" height="0.7" fill="#8f92b2"/>
<rect x="205.500" y="305.500" width="76.100" height="96.500" fill="#fff" stroke="#dfe3ea" stroke-width=".6"/>
<path d="M215.800 310.300 L270.300 308.900 L270.600 315.400 L216.100 316.700 Z" fill="#ee9878"/>
<rect x="217.800" y="310.600" width="51" height="5.600" fill="#f3c144"/><rect x="232.900" y="312.300" width="21.300" height="2.700" fill="#5e5a3c"/>
<rect x="211" y="317.6" width="64.300" height="32.700" fill="#e4e4e4" stroke="#eedfa8" stroke-width=".7"/>
<rect x="229.40" y="326.80" width="27.70" height="15.00" fill="#8c8c8c"/><path d="M231.91 339.71 L238.67 332.89 L242.72 336.53 L247.74 330.89 L254.69 339.71 Z" fill="#fff"/><circle cx="237.22" cy="330.25" r="1.25" fill="#fff"/>
<rect x="210.300" y="352.00" width="2.600" height="2.600" rx=".6" fill="#ee8a66"/>
<rect x="214.40" y="352.75" width="12.50" height="1.3" fill="#5b6480"/>
<rect x="211" y="355.9" width="64.300" height="32.700" fill="#e4e4e4" stroke="#eedfa8" stroke-width=".7"/>
<rect x="229.40" y="365.00" width="27.70" height="15.00" fill="#8c8c8c"/><path d="M231.91 377.91 L238.67 371.09 L242.72 374.73 L247.74 369.09 L254.69 377.91 Z" fill="#fff"/><circle cx="237.22" cy="368.45" r="1.25" fill="#fff"/>
<rect x="210.300" y="390.30" width="2.600" height="2.600" rx=".6" fill="#ee8a66"/>
<rect x="214.40" y="391.05" width="12.50" height="1.3" fill="#5b6480"/>
<rect x="210.30" y="393.75" width="65.00" height="0.5" fill="#f3e3b0"/>
<rect x="210.30" y="395.65" width="22.10" height="1.1" fill="#6d7892"/>
<rect x="256.80" y="395.65" width="5.10" height="1.1" fill="#6d7892"/>
<rect x="262.50" y="395.65" width="12.50" height="0.7" fill="#c4c6cc"/>
<rect x="312.600" y="308.500" width="116.300" height="90.800" rx="2.300" fill="#fff" stroke="#427ec1" stroke-width="1.500"/>
<path d="M338.500 317.300 L402.600 315.400 L402.900 322.600 L338.800 324.500 Z" fill="#ee9878"/>
<rect x="341.200" y="316.700" width="58.400" height="6.900" fill="#f3c144"/><rect x="358.100" y="318.700" width="25.200" height="3.600" fill="#5e5a3c"/>
<rect x="359.90" y="325.80" width="21.20" height="1.6" fill="#5b6480"/>
<rect x="319.1" y="329" width="32.800" height="31.700" fill="#e4e4e4" stroke="#eedfa8" stroke-width=".7"/>
<rect x="321.30" y="336.80" width="28.60" height="16.10" fill="#8c8c8c"/><path d="M323.89 350.66 L330.87 343.34 L335.05 347.24 L340.23 341.19 L347.41 350.66 Z" fill="#fff"/><circle cx="329.37" cy="340.51" r="1.30" fill="#fff"/>
<rect x="319.40" y="362" width="3.600" height="3.600" fill="#ee8a66"/>
<rect x="324.90" y="362.70" width="26.80" height="1.4" fill="#5b6480"/>
<rect x="324.90" y="366.30" width="20.20" height="1.4" fill="#5b6480"/>
<rect x="354.1" y="329" width="32.800" height="31.700" fill="#e4e4e4" stroke="#eedfa8" stroke-width=".7"/>
<rect x="356.30" y="336.80" width="28.60" height="16.10" fill="#8c8c8c"/><path d="M358.89 350.66 L365.87 343.34 L370.05 347.24 L375.23 341.19 L382.41 350.66 Z" fill="#fff"/><circle cx="364.37" cy="340.51" r="1.30" fill="#fff"/>
<rect x="354.40" y="362" width="3.600" height="3.600" fill="#ee8a66"/>
<rect x="359.90" y="362.70" width="26.80" height="1.4" fill="#5b6480"/>
<rect x="359.90" y="366.30" width="20.20" height="1.4" fill="#5b6480"/>
<rect x="388.9" y="329" width="32.800" height="31.700" fill="#e4e4e4" stroke="#eedfa8" stroke-width=".7"/>
<rect x="391.10" y="336.80" width="28.60" height="16.10" fill="#8c8c8c"/><path d="M393.69 350.66 L400.67 343.34 L404.85 347.24 L410.03 341.19 L417.21 350.66 Z" fill="#fff"/><circle cx="399.17" cy="340.51" r="1.30" fill="#fff"/>
<rect x="389.20" y="362" width="3.600" height="3.600" fill="#ee8a66"/>
<rect x="394.70" y="362.70" width="26.80" height="1.4" fill="#5b6480"/>
<rect x="394.70" y="366.30" width="20.20" height="1.4" fill="#5b6480"/>
<rect x="319.10" y="388.55" width="102.40" height="0.5" fill="#f6ecc8"/>
<rect x="319.10" y="390.90" width="26.10" height="1.2" fill="#6d7892"/>
<rect x="398.70" y="390.90" width="5.60" height="1.2" fill="#6d7892"/>
<rect x="405.00" y="390.95" width="16.00" height="0.7" fill="#c4c6cc"/>
</g>
<path d="M443.900 203.100 h3.600 l-1.800 2 z" fill="#33383f"/>
<g transform="translate(72,437.700) scale(.82)">
  <circle r="2.700" fill="none" stroke="#3f4853" stroke-width="1.900"/>
  <g fill="#3f4853"><rect x="-.9" y="-4.300" width="1.800" height="1.600"/><rect x="-.9" y="2.700" width="1.800" height="1.600"/><rect x="-4.300" y="-.9" width="1.600" height="1.800"/><rect x="2.700" y="-.9" width="1.600" height="1.800"/>
  <g transform="rotate(45)"><rect x="-.9" y="-4.300" width="1.800" height="1.600"/><rect x="-.9" y="2.700" width="1.800" height="1.600"/><rect x="-4.300" y="-.9" width="1.600" height="1.800"/><rect x="2.700" y="-.9" width="1.600" height="1.800"/></g></g>
 </g>
</svg>
<div class="t c" style="left:249.5px;top:185.6px;font-size:7.100px;font-weight:bold;color:#3a3d42;letter-spacing:-.17px">Create Image from Template</div>
<div class="t" style="left:47.6px;top:199.9px;font-size:7.050px;letter-spacing:-.15px;color:#4d545e">Select a template or</div>
<div class="t" style="left:111px;top:199.9px;font-size:7.050px;letter-spacing:-.15px;color:#3f7fc6">Download More...</div>
<div class="t" style="left:338.2px;top:199.9px;font-size:7.050px;letter-spacing:-.15px;color:#4d545e">Category</div>
<div class="t" style="left:375.9px;top:200.9px;font-size:5.900px;color:#4d545e;-webkit-text-stroke:.15px #4d545e">All</div>
<div class="t c" style="left:116px;top:281.7px;font-size:7.100px;color:#596069;letter-spacing:-.17px">Business Blocks 4 Steps Portrait</div>
<div class="t c" style="left:243.4px;top:281.7px;font-size:7.100px;color:#596069;letter-spacing:-.17px">Business Blocks Laptop Portrait</div>
<div class="t c" style="left:370.5px;top:281.7px;font-size:7.100px;color:#596069;letter-spacing:-.17px;letter-spacing:-.2px">Deep Sea Planet Hero Top Portrait</div>
<div class="t c" style="left:116px;top:405.3px;font-size:7.100px;color:#596069;letter-spacing:-.17px;letter-spacing:-.24px">Deep Sea Planet Stacked Landscape</div>
<div class="t c" style="left:243.2px;top:405.3px;font-size:7.100px;color:#596069;letter-spacing:-.17px">Industrial 2 Steps Portrait</div>
<div class="t c" style="left:370.6px;top:405.3px;font-size:7.100px;letter-spacing:-.17px;color:#4a86c8">Industrial 3 Steps Landscape</div>
<div class="t c" style="left:52.3px;top:434.5px;font-size:6px;font-weight:bold;color:#4d545e">?</div>
<div class="t" style="left:78.4px;top:435.2px;font-size:7.100px;letter-spacing:-.15px;color:#4d545e">Settings</div>
<div class="t c" style="left:372.4px;top:435.2px;font-size:6.800px;letter-spacing:-.1px;color:#4d545e">Cancel</div>
<div class="t c" style="left:426.8px;top:435.2px;font-size:6.800px;letter-spacing:-.1px;color:#fff;-webkit-text-stroke:.15px #fff">Create</div>

<svg class="abs" style="left:0;top:0" width="1040" height="690" viewBox="0 0 1040 690">
 <defs><filter id="cs" x="-40%" y="-40%" width="180%" height="180%"><feGaussianBlur stdDeviation="1"/></filter></defs>
 <g id="cur">
 <path d="M421.900 380 L421.900 404.600 L427.100 401 L433.900 412.600 L438.300 409.800 L432.700 399 L440.100 398 Z" fill="#000" stroke="#000" stroke-width="3.600" stroke-linejoin="round" opacity=".42" transform="translate(.7,1.500)" filter="url(#cs)"/>
 <path d="M436.800 401.800 H444.200" stroke="#555" stroke-width=".9" opacity=".8"/>
 <path d="M421.900 380 L421.900 404.600 L427.100 401 L433.900 412.600 L438.300 409.800 L432.700 399 L440.100 398 Z" fill="#fff" stroke="#fff" stroke-width="3.800" stroke-linejoin="miter" stroke-miterlimit="6"/>
 <path d="M421.900 380 L421.900 404.600 L427.100 401 L433.900 412.600 L438.300 409.800 L432.700 399 L440.100 398 Z" fill="#000"/>
 </g>
</svg>

</div>
</body>
</html>
